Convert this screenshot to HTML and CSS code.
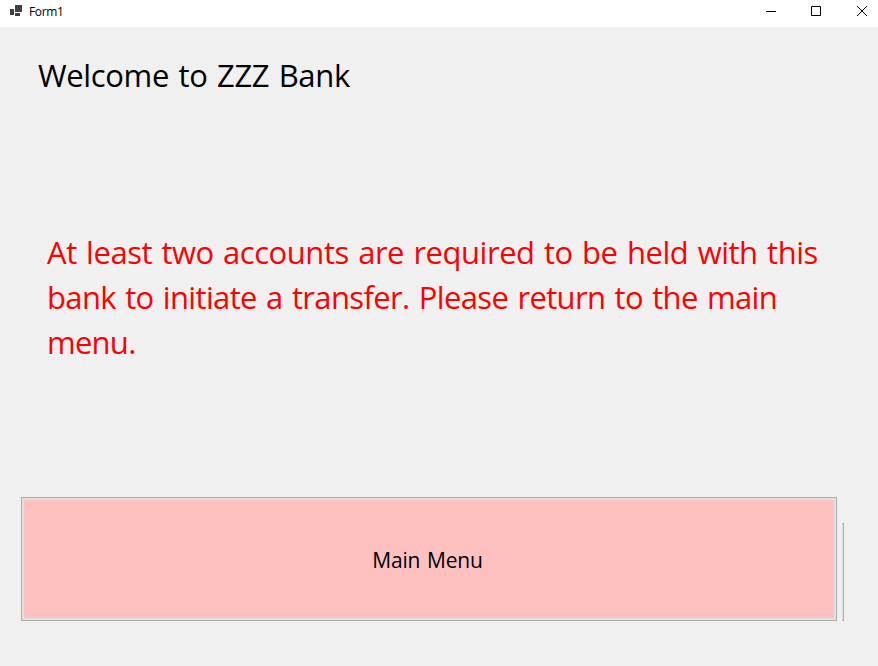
FILE: index.html
```html
<!DOCTYPE html>
<html lang="en">
<head>
<meta charset="utf-8">
<title>Form1</title>
<link rel="stylesheet" href="styles.css">
</head>
<body>
<div class="window">
  <header class="titlebar">
    <svg class="app-icon" width="13" height="12" viewBox="0 0 13 12" shape-rendering="crispEdges" fill="#404040"><path d="M5 0h7v7H5zM0 4h4v6H0zM5 8h5v3H5z"/></svg>
    <span class="caption">Form1</span>
    <div class="controls">
      <svg width="46" height="22" viewBox="0 0 46 22" stroke="#000" fill="none"><path d="M18 11.5h10"/></svg>
      <svg width="46" height="22" viewBox="0 0 46 22" stroke="#000" fill="none"><path d="M17.500 6.500h9v9h-9z"/></svg>
      <svg width="46" height="22" viewBox="0 0 46 22" stroke="#000" fill="none"><path d="M17 6l10 10M27 6L17 16"/></svg>
    </div>
  </header>
  <main class="form">
    <h1 class="title">Welcome to ZZZ Bank</h1>
    <p class="message"><span class="line first">At least two accounts are required to be held with this</span> <span class="line second">bank to initiate a transfer. Please return to the main</span> <span class="line third">menu.</span></p>
    <div class="actions">
      <button class="menu-button" type="button"><span>Main Menu</span></button>
      <div class="side-edge"></div>
    </div>
  </main>
</div>
</body>
</html>
```
FILE: styles.css
```css
* { box-sizing: border-box; }
body { margin: 0; font-family: "Open Sans", "Noto Sans", sans-serif; color: #000; }
.window { width: 878px; height: 666px; background: #f0f0f0; overflow: hidden; }
.titlebar { height: 27px; background: #fff; display: flex; align-items: flex-start; padding-left: 10px; }
.app-icon { margin-top: 5px; }
.caption { margin-left: 6px; font-size: 12px; line-height: 16px; margin-top: 4px; letter-spacing: -0.35px; }
.controls { display: flex; margin-left: auto; margin-right: -8px; }
.controls svg { display: block; }
.form { height: 639px; display: flex; flex-direction: column; }
.title { margin: 26px 0 0 38px; font-size: 31px; line-height: 45px; font-weight: 400; letter-spacing: -0.35px; word-spacing: 1.8px; white-space: nowrap; }
.message { margin: 132px 0 0 47px; color: #f00; font-size: 31px; line-height: 45px; white-space: nowrap; word-spacing: 1.8px; }
.line { display: block; width: max-content; }
.first { letter-spacing: -0.47px; }
.second { letter-spacing: -0.64px; }
.third { letter-spacing: -0.75px; }
.actions { display: flex; align-items: flex-end; margin: 132px 0 0 21px; height: 124px; }
.menu-button { width: 816px; height: 124px; margin: 0; padding: 2px 3px 0 0; border: 1px solid #adadad; border-radius: 0; background: #ffc0c0; box-shadow: inset 0 0 0 2px #e1e1e1; color: #000; font: 400 21px/30px "Open Sans", "Noto Sans", sans-serif; letter-spacing: -0.2px; word-spacing: 1.5px; }
.side-edge { width: 2px; height: 98px; margin-left: 5px; background: #e1e1e1; border: solid #adadad; border-width: 1px 1px 1px 0; }
```
